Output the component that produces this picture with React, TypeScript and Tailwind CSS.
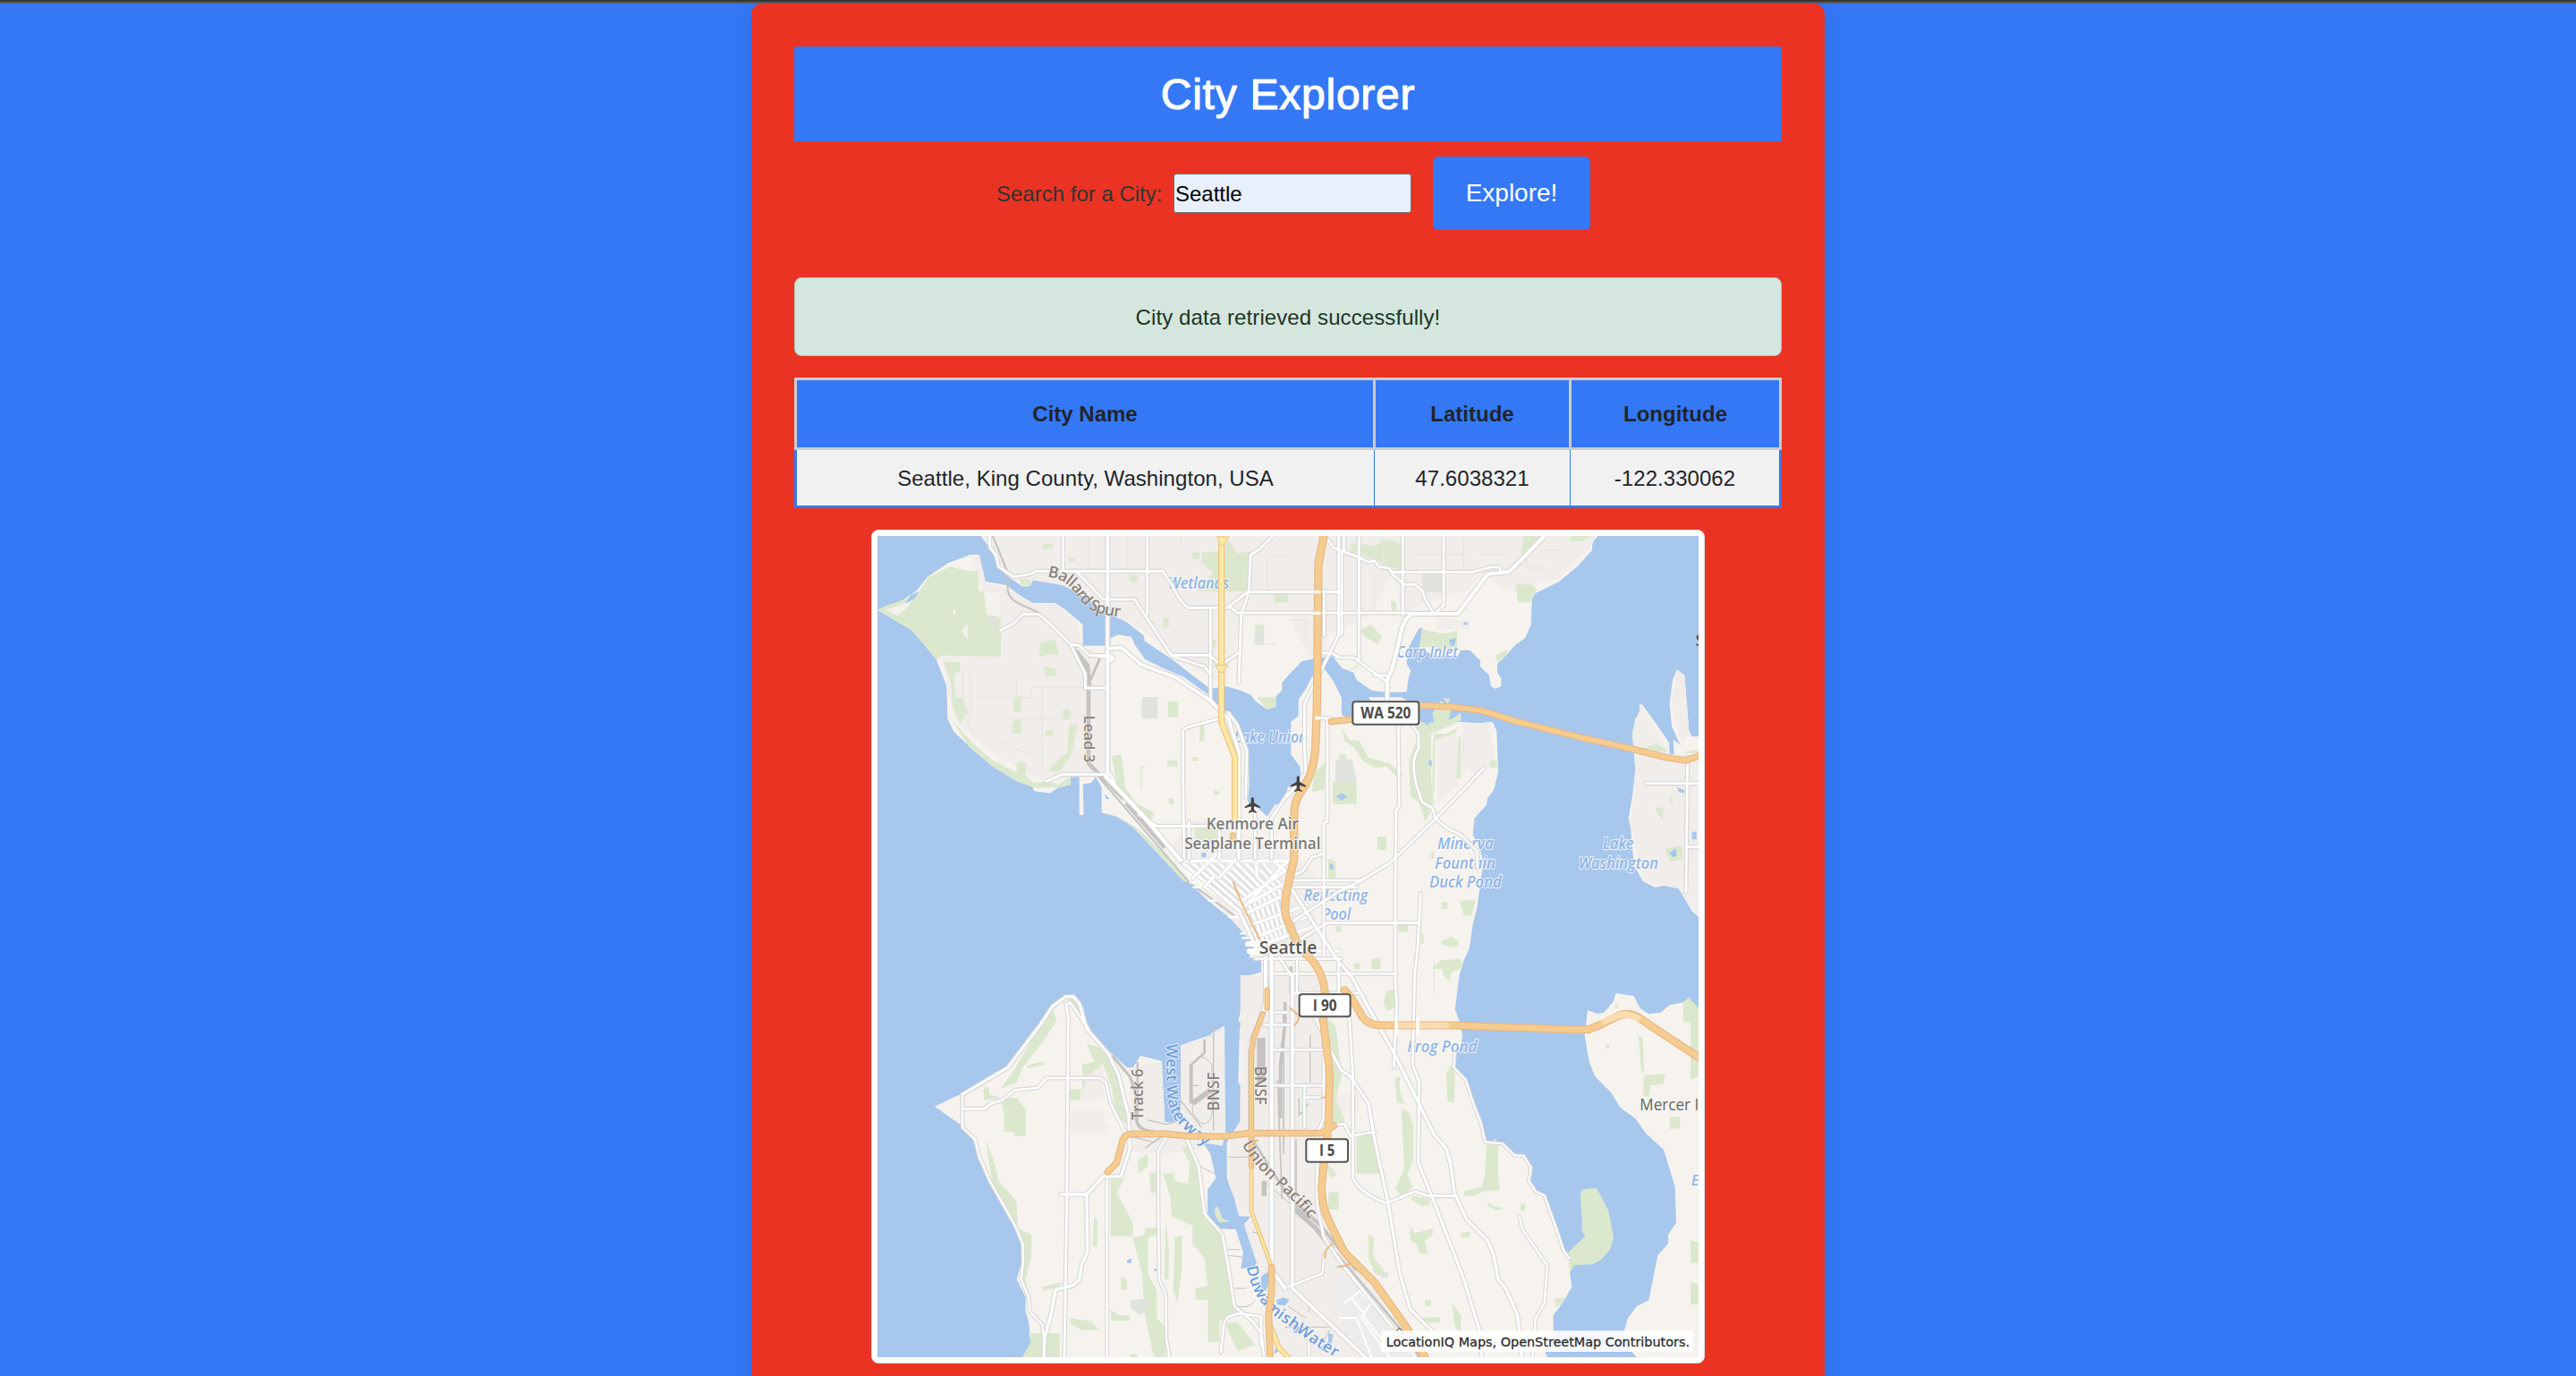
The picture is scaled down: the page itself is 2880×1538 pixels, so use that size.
import React from "react";

type Road = { d: string; w: number };

const LAND: string[] = [
  "M380 27 415 75 440 130 465 160 495 180 520 197 545 195 555 175 575 162 625 172 655 192 695 212 740 240 800 290 850 300 880 325 925 360 930 380 1020 440 1090 495 1150 540 1200 530 1250 545 1285 560 1300 580 1340 610 1365 600 1370 565 1390 545 1390 520 1415 490 1440 465 1455 448 1500 437 1560 430 1590 470 1630 485 1640 510 1690 545 1750 552 1808 550 1815 500 1822 480 1808 455 1815 400 1850 335 1862 345 1850 400 1900 430 1980 430 1990 410 2020 410 2055 445 2055 465 2085 495 2090 530 2105 540 2125 530 2125 505 2112 485 2112 455 2140 430 2170 395 2205 370 2225 325 2229 225 2320 180 2380 130 2430 75 2430 50 2450 27Z",
  "M345 90 375 90 395 180 465 192 500 218 540 248 560 252 630 252 665 275 700 305 722 325 722 395 815 395 815 370 840 358 885 365 895 390 930 440 990 470 1060 500 1150 565 1175 600 1210 620 1250 680 1278 740 1280 860 1275 920 1310 940 1340 968 1365 930 1395 920 1410 870 1455 850 1450 800 1420 760 1420 650 1445 630 1445 575 1470 540 1490 500 1530 470 1560 510 1590 570 1590 628 1625 640 1650 615 1690 585 1680 568 1790 568 1830 590 1850 630 1855 655 1870 670 1900 675 1940 655 1980 650 2050 655 2095 650 2110 680 2115 820 2100 880 2080 905 2075 930 2035 975 2030 1030 2052 1070 2065 1120 2055 1190 2045 1270 2030 1330 2018 1410 2000 1450 1985 1500 1970 1615 1985 1655 1995 1700 1990 1735 1970 1770 1968 1810 2005 1845 2035 1940 2055 1990 2070 2060 2130 2063 2170 2100 2200 2105 2225 2140 2230 2165 2220 2190 2240 2220 2270 2240 2310 2340 2335 2425 2360 2440 2355 2500 2362 2545 2330 2600 2300 2640 2300 2700 2270 2760 2280 2781 520 2781 548 2730 540 2660 530 2630 530 2580 500 2520 520 2450 515 2400 495 2340 440 2240 400 2170 365 2080 355 2050 310 2000 225 1940 320 1895 470 1805 580 1660 620 1600 665 1568 690 1570 725 1610 735 1670 800 1745 870 1810 890 1810 915 1770 987 1788 997 1992 1050 1992 1050 1735 1150 1715 1152 1695 1197 1670 1200 2025 1250 1990 1250 1895 1275 1905 1243 1860 1248 1675 1300 1675 1300 1655 1243 1655 1280 1500 1320 1490 1320 1450 1280 1440 1285 1415 1300 1410 1270 1360 1240 1330 1180 1280 1130 1240 1080 1190 1000 1100 900 1005 840 970 785 955 785 870 765 835 750 855 722 860 725 962 710 962 710 835 680 835 680 862 640 870 612 890 560 883 550 865 500 850 420 800 350 740 290 685 268 640 265 530 230 440 150 345 33 275 100 255 165 210 200 165 270 118Z",
  "M2594 590 2600 595 2640 650 2688 720 2690 760 2705 760 2702 710 2725 727 2697 665 2690 590 2700 510 2715 475 2740 495 2755 680 2765 700 2787 700V1305L2765 1285 2720 1210 2685 1198 2640 1205 2600 1185 2570 1130 2560 1010 2552 975 2565 900 2575 810 2565 690 2575 640 2592 620 2588 595Z",
  "M2787 1615 2755 1575 2740 1590 2690 1600 2660 1625 2620 1630 2590 1610 2570 1570 2510 1560 2500 1590 2470 1625 2450 1630 2415 1618 2405 1700 2420 1790 2440 1840 2495 1895 2525 1945 2575 1980 2610 2030 2670 2085 2690 2150 2708 2210 2712 2330 2685 2370 2685 2400 2650 2440 2620 2590 2580 2610 2550 2650 2535 2700 2560 2760 2580 2781H2787Z",
];

const SUBURB: string[] = [
  "M385 27 430 100 490 165 700 200 800 285 900 330 1030 430 1200 530 1220 440 1260 290H1410L1480 430H1530L1545 360 1690 290 1760 150 1790 290 1860 255 2010 210 2070 150 2130 210 2180 215 2229 190 2320 170 2430 60 2440 27Z",
  "M345 95 375 95 395 185 465 200 560 255 630 255 700 310 722 400 800 430 795 830 680 835 620 850 560 840 480 790 400 740 300 650 275 560 250 430 445 430V290L380 200Z",
  "M1995 655 2090 655 2100 780 2040 830 1990 800ZM1910 700 1975 680 1980 860 1910 920Z",
  "M2594 595 2690 760 2787 760V1300L2720 1210 2600 1185 2560 1000 2575 810 2565 690ZM2695 590 2715 475 2740 495 2755 680 2730 730Z",
  "M1250 1500H1510L1530 1640 1540 2000 1500 2060V2260L1540 2400 1700 2550 1830 2781H1400L1290 2500 1210 2180 1220 2030 1250 1990V1680Z",
  "M880 1810 985 1790 997 1992 1050 1992 1050 1735 1150 1700 1195 1670 1200 2070 990 2100 880 2090Z",
  "M1010 1090 1080 985 1180 985 1500 1150 1500 1400H1300Z",
  "M680 1955H795V2000H805V2035H680ZM720 1880 760 1800 790 1810V1920H715ZM1570 1900H1645V1960H1570ZM1990 310H2020V340H1910V300Z",
];

const PARKS: string[] = [
  "M33 275 60 262 165 225 205 165 275 130 340 145 372 145V212H390L400 290 447 300V432L250 428 232 442 150 345Z",
  "M255 450H310V480L290 490 295 570H320L335 620 310 655 285 600 280 520Z",
  "M280 640 350 720 420 780 500 820 560 855 600 850 640 860 680 835 680 862 640 870 560 872 500 850 420 800 340 735Z",
  "M500 785H530V830L560 860 500 840ZM675 660H705L685 760 640 820 605 815 630 785 670 755Z",
  "M580 385 630 375 640 425H600L575 435ZM590 465 630 470V495H595ZM490 565H515V620L490 615ZM485 655 500 640 517 650V690H485ZM655 610H680V643H655ZM598 678H622V700H598ZM305 600 335 615 310 640Z",
  "M505 170 545 172 550 190 520 195ZM1200 35 1215 45 1240 85 1282 80 1278 213H1195ZM1090 82H1113V105H1090ZM1120 80 1180 82V212H1105L1160 150 1122 120Z",
  "M878 157H905V182H878ZM990 300H1010V333H990ZM1300 325H1330V350H1300ZM1362 220H1410V250H1362ZM585 55H622V70H585ZM672 98H694V112H672ZM1155 375H1168V400H1155Z",
  "M820 765 850 760 855 800 865 870 900 925 963 955 955 975 905 960 840 890ZM1305 568H1370V600L1340 610ZM1007 580 1042 585V635H1007ZM1005 780H1040V800H1005ZM1090 768H1108V782H1090ZM1115 660 1130 665V715H1112ZM1160 880 1180 885V895H1160ZM1010 905 1028 910V928H1012ZM915 800H930V805H920V880H915Z",
  "M1098 1005H1170V1045L1130 1050 1098 1040ZM785 955 840 970 900 1005 1000 1100 1080 1190 1060 1185 980 1100 890 1005 830 965Z",
  "M1620 50 1700 60 1740 40 1790 55V145L1750 130 1700 105 1620 80ZM2175 190 2225 190 2245 205 2225 250H2180ZM2200 27H2280L2240 60 2190 110ZM2355 27H2430L2400 45H2355Z",
  "M1850 335 1880 345 1930 355 1978 345V400L1950 410 1880 400 1850 400ZM1655 340 1690 325 1725 365 1710 390 1660 360ZM2105 430 2150 405 2140 430 2112 450ZM1610 480 1650 455 1640 470ZM1755 240 1775 250 1770 300 1758 290Z",
  "M1895 620 1920 580 1960 600 1950 640 1900 655ZM1930 570 1955 575 1945 590ZM1990 620V645L1960 660 1890 690 1880 655 1960 640Z",
  "M1815 660 1860 650 1890 670V840L1900 920 1870 990 1850 920 1820 900 1815 780 1850 690Z",
  "M1900 690 1940 690 1980 670 1970 690 1905 710 1900 880 1895 900V760ZM1980 700H1990V840H1975ZM2090 780H2110V805H2085Z",
  "M1560 850H1640V927H1560ZM1580 760H1605V778H1580ZM1590 670 1615 710 1650 715 1680 770 1750 790 1800 830 1770 830 1740 800 1700 805 1660 780 1630 735 1600 715ZM1500 820 1545 780 1530 880 1490 885Z",
  "M1545 1110 1570 1120V1175H1545ZM1710 1035H1740V1080H1710ZM1890 1085H1900V1110H1890ZM1925 1255H1945V1278H1925ZM1985 1250 2040 1248 2025 1300 2000 1300ZM1780 1330H1812V1355H1780ZM1925 1385 1960 1370 1985 1390 1970 1408 1930 1400ZM1570 1335H1590V1355H1570ZM1855 1360H1865V1395H1855Z",
  "M1925 1450 1990 1445 1995 1475 1960 1490 1950 1520 1930 1500V1480L1900 1478V1470ZM1740 1550H1768V1610L1740 1620 1730 1590ZM1690 1445 1720 1440V1480H1690ZM1632 1460H1652V1480H1632Z",
  "M1535 1640 1570 1670 1590 1830 1570 1920 1600 1980 1600 2000 1565 2000 1545 2020 1560 1880 1545 1800ZM1640 2045 1695 2030 1720 2165H1640ZM1540 2130 1575 2170 1550 2180ZM1545 2230 1580 2225V2285H1545Z",
  "M1768 1845 1785 1840V1890L1800 1930 1775 1930ZM1790 1945 1815 1960 1830 2000V2120L1810 2170 1830 2210 1790 2240 1770 2215 1800 2150ZM1830 2240 1885 2250V2270L1860 2275 1820 2250Z",
  "M1940 1830 1960 1800 1970 1830 1968 1925H1945ZM2075 2060 2115 2060 2115 2170 2120 2220 2060 2225 2040 2240 2000 2240V2225L2060 2210 2070 2170ZM2190 2265H2205V2290H2190ZM2080 2260 2100 2275 2135 2280 2110 2290 2080 2275Z",
  "M1820 2340 1835 2365 1895 2350V2370L1870 2390 1880 2440 1850 2430 1840 2400 1820 2390ZM1680 2370 1700 2380 1695 2440 1730 2490 1725 2510 1700 2500 1680 2450ZM1990 2365 2020 2360V2380H1990ZM1850 2650 1920 2645V2665H1850ZM1960 2600 1990 2640V2700L1970 2680ZM1870 2590H1890V2610H1870Z",
  "M2390 2235 2395 2220 2445 2213 2485 2290 2502 2380 2490 2420 2460 2455 2430 2470 2370 2472 2355 2500 2350 2430 2380 2400 2407 2375 2395 2355 2397 2330ZM2303 2585 2345 2580 2310 2615ZM2100 2050 2110 2050 2108 2062H2098Z",
  "M2735 1590 2755 1575 2787 1610V1840L2760 1850V1660L2735 1655ZM2605 1835 2675 1830 2670 1865 2625 1870 2620 1910 2600 1900ZM2585 1700 2600 1710 2605 1830 2595 1820ZM2690 1975H2725V2015H2690ZM2760 2390 2787 2395V2465H2760ZM2760 2530 2787 2535V2605H2760ZM2475 1730H2487V1745H2475ZM2510 1590 2520 1610H2505Z",
  "M2600 740 2640 725 2680 740V750H2610ZM2640 935 2670 940 2665 980 2650 960ZM2675 1075 2730 1065 2735 1110 2690 1120ZM2690 900 2700 905V925H2690ZM2740 750 2787 745V755H2740Z",
  "M390 1876H408V1900L440 1908V1918H390ZM447 1915 500 1910 530 1950V2040H495L490 2025H457V1960ZM445 1880 490 1820 560 1700 620 1610 635 1650 590 1720 520 1810 500 1860ZM530 1805 560 1795 590 1790 595 1800 540 1812ZM675 1882H715V1920H675ZM650 1560 700 1590 720 1625H710L680 1590Z",
  "M735 1730 775 1740 830 1800 850 1870 870 1960 870 2000 830 1970 820 1880 790 1800 740 1835 720 1890V1800L760 1790Z",
  "M395 2050 420 2110 440 2190 500 2260 505 2350 550 2370 550 2440 530 2520 540 2590 520 2530 525 2420 480 2300 420 2210Z",
  "M815 2185 860 2185 835 2230 890 2330V2376H815ZM890 2380 930 2370V2350L970 2345V2370L940 2380V2500L970 2560V2650L1000 2680V2781H960L930 2640 920 2500ZM760 2310 770 2320V2410H755ZM815 2622 845 2640 880 2640V2658H818ZM850 2510 870 2520V2555H850Z",
  "M945 2162H980V2230H950ZM990 2165 1030 2165 1030 2190 1075 2200 1080 2130 1055 2080 1075 2070 1110 2150 1130 2310 1190 2375 1220 2500 1240 2630 1180 2660V2730H1142V2590L1100 2590V2550L1140 2540 1130 2450 1090 2400 1090 2340 1020 2310 1015 2240ZM1000 2310 1010 2420V2520H995ZM1030 2380 1055 2370V2480L1040 2600 1025 2560Z",
  "M540 2700H645V2781H520L548 2730ZM585 2545 655 2530 640 2545 590 2560ZM680 2650 750 2660 775 2690 720 2690 680 2670ZM1200 2670 1240 2660 1300 2740 1240 2760ZM905 2120 940 2100V2140L910 2165ZM880 2770H905V2781H880Z",
];

const WATERWAYS: string[] = [
  "M1200 1990 1250 1990 1220 2035 1205 2060 1205 2180 1230 2250 1245 2308 1285 2310 1262 2335 1290 2420 1305 2465 1295 2480 1252 2483 1260 2430 1235 2352 1185 2350 1140 2310 1140 2220 1168 2180 1150 2100 1125 2062 1190 2072 1202 2025Z",
  "M1320 2510 1350 2490 1355 2510 1335 2560 1320 2550ZM1370 2590 1395 2580 1415 2590 1400 2608 1375 2605ZM1545 2700 1562 2705 1555 2735 1525 2760 1515 2750 1545 2730ZM1425 2680 1440 2660 1450 2700 1430 2700ZM1365 2750 1380 2760 1365 2770Z",
  "M125 255 145 225 172 213 160 235ZM795 890 812 910H800ZM1120 1090H1135V1105H1120ZM1998 318 2010 316 2015 325 2000 325ZM1570 900 1590 890 1608 900 1590 915ZM1550 1125 1562 1130V1145H1550ZM2765 1020 2780 1018V1045H2765ZM2690 1090 2710 1075 2715 1100 2700 1105ZM870 2455 885 2450V2465H870ZM1882 780 1892 780V800L1882 795ZM2715 870 2740 880V890L2720 885ZM1848 340 1860 335 1852 390H1845ZM1950 375 1975 370 1968 395H1955ZM960 2485H970V2492H960Z",
];

const GREY_AREAS =
  "M920 567H973V640H920ZM1862 150H1930V215H1862ZM1570 778 1625 775 1640 850H1568ZM880 2590 940 2585 945 2610 915 2640 885 2620ZM1725 2495H1745V2515H1725ZM405 300H435V325H410ZM1298 345H1330V392H1298Z";

const RAILS: Road[] = [
  { d: "M420 27 470 150V210Q475 240 510 255L575 285 640 345 680 390", w: 6 },
  { d: "M675 385 735 470 741 540V790L780 830 860 910", w: 14 },
  { d: "M700 410 740 460 748 540M780 435 748 510", w: 9 },
  { d: "M870 920 1000 1070", w: 22 },
  { d: "M770 830 1080 1190 1230 1300", w: 6 },
  { d: "M820 1770 880 1840 900 1900V1980Q905 2020 960 2025", w: 9 },
  { d: "M905 1790V2000Q910 2020 960 2022", w: 7 },
  { d: "M1130 1715V1760L1085 1800", w: 8 },
  { d: "M1085 1800V1930", w: 12 },
  { d: "M1090 1930 1150 1885", w: 18 },
  { d: "M1085 1800Q1120 1750 1155 1800V1970Q1130 2030 1090 1960Z", w: 3 },
  { d: "M940 1985 1000 2000 1060 1985M880 2040 960 2060 990 2040M1050 1920 1120 2010M930 2080 980 2045M1160 1670V2020M1090 1870H1110", w: 4 },
  { d: "M1320 1710V1860", w: 28 },
  { d: "M1400 1590V1660L1385 1800V1980M1420 1470V1560", w: 11 },
  { d: "M1375 1850 1390 2250M1395 1620V2100M1437 2050V2240L1425 2250", w: 5 },
  { d: "M1484 1700V1860M1447 1910V1970L1480 1930", w: 4 },
  { d: "M1290 2050 1410 2240 1790 2690 1850 2781", w: 8 },
  { d: "M1330 2190V2240M1425 2280 1500 2345 1560 2420", w: 16 },
  { d: "M1430 2260 1520 2340 1640 2490", w: 12 },
  { d: "M1330 2190 1420 2270M1290 2360 1320 2370 1300 2330M1410 2610 1470 2650M1480 2590V2630M1400 2680H1550M1550 2690 1520 2740", w: 3 },
  { d: "M1210 2420H1250M1210 2440 1260 2445M1230 2550H1270M1210 2110H1280M1110 2140 1165 2165M1240 2610Q1280 2620 1300 2590M1210 2350H1230", w: 3 },
];

const MINOR =
  "M740 27V140M370 570H550V535H800M585 535V820M480 640H640M500 500V565M870 27V140M1050 27V60M1360 90 1410 100M1340 100V210M1300 390H1370M320 480V620L360 700M345 490V640M450 720 540 760M1700 150V290M1730 30V150M1830 90H2000M1850 230 1900 230M2000 30V140M2050 90H2130M2210 70V135H2280M2210 75H2330M1410 310H1470V390M1240 420V520M1900 1450V1560M2000 700V820";

const AIRFIELD = "M1600 2600 1650 2560 1690 2600 1660 2640 1740 2740M1650 2640 1750 2780M1580 2650H1640L1690 2781M1620 2580 1670 2640";

const ROADS: Road[] = [
  { d: "M805 27V830", w: 11 },
  { d: "M655 27V140M938 27V290M410 27V65L430 90 440 130 490 165 545 155 565 145H990L1020 190Q1045 245 1075 268H1180", w: 8 },
  { d: "M700 145 790 240H895L935 300 1020 430 1130 465 1150 490M1150 270V580", w: 8 },
  { d: "M1210 265 1275 215H1590M1190 270 1215 265 1240 285H1820M1360 27 1310 75 1285 90 1278 220 1253 290 1245 520M1150 430 1185 460 1250 415M1020 427H1150", w: 8 },
  { d: "M445 345 490 320 520 290H575L610 320 680 390 730 490V537H800M680 390 710 395 745 428H800", w: 8 },
  { d: "M780 430H815Q830 440 815 445M815 405 850 400 920 460 1030 500 1150 580 1210 640 1245 750V1110", w: 11 },
  { d: "M1210 620 1240 660 1272 750 1268 905M1180 640 1070 670 1058 680V850L1062 1110M1078 985V1110M600 850 650 827H815L830 860", w: 8 },
  { d: "M800 835 920 960 1050 1115", w: 13 },
  { d: "M910 960 970 1000H1180M1300 960V1110M1355 970V1110M1410 890 1350 980M1180 1000V1110", w: 8 },
  { d: "M1545 40 1560 65 1650 100 1680 115 1700 110 1715 130 1750 135 1760 155 1800 190H1835L1860 210 1870 240 1900 290", w: 8 },
  { d: "M1580 27V360L1530 460 1475 570 1465 590V740L1470 820 1410 900M1598 27V80M1590 80V360M1648 27V440M1531 210V360", w: 8 },
  { d: "M1795 27V290M1932 27V260L1900 290M1760 148H2030L2090 132H2120L2125 148", w: 8 },
  { d: "M2270 27 2190 110 2150 148 2080 155 2000 260 1980 288H1830Q1795 300 1785 370L1760 470 1743 510V580", w: 12 },
  { d: "M1520 420H1560L1580 435H1630L1740 515M1700 495H1745M1500 638H1550L1565 650", w: 8 },
  { d: "M1542 640V985L1530 990V1435M1780 660 1783 935 1773 945 1770 1210V1520L1775 1600 1765 1810", w: 8 },
  { d: "M1825 660 1848 690V740Q1820 780 1840 860L1860 920 1895 940 1905 975 1940 1005 1990 1030 2045 1085V1140", w: 8 },
  { d: "M2068 805 1900 980 1750 1125 1650 1185 1580 1220 1410 1330", w: 8 },
  { d: "M1410 1182H1660M1430 1205H1640M1450 1380 1540 1325H1850M1855 1225 1845 1410 1835 1500 1828 1800 1850 1860 1847 2130M1420 1170 1460 1150 1490 1105 1530 1092", w: 8 },
  { d: "M1415 1200 1550 1410 1580 1455 1620 1500 1770 1770 1900 2035 1940 2080 1955 2130 1968 2230 2010 2320 2080 2390 2100 2440 2115 2520 2140 2550 2180 2640 2195 2781", w: 10 },
  { d: "M2750 770 2745 1220M2610 857H2787M2750 1070H2787", w: 8 },
  { d: "M318 1900 470 1810 580 1665 620 1605 665 1572H690L710 1595 735 1680 805 1760 840 1830 855 1890 875 1970 880 2080 850 2175H800", w: 9 },
  { d: "M665 1597 673 1640 668 2270 660 2781M665 1597 680 1592 740 1680", w: 8 },
  { d: "M318 1900V2010L360 2050 375 2110 410 2190 495 2340 520 2400 522 2460 515 2520 540 2580 545 2630 585 2670 592 2720", w: 7 },
  { d: "M318 1948H390L415 1930 450 1920 495 1885 570 1878 600 1845H780L800 1860 815 1930 865 2030", w: 8 },
  { d: "M648 2235H735L800 2165M735 2235 737 2430 718 2470 710 2520 690 2540 630 2555 615 2640 592 2720V2781", w: 10 },
  { d: "M803 2170V2781M1000 2045 975 2090V2260L978 2520 1000 2570 1002 2720 1012 2781", w: 7 },
  { d: "M1070 2050 1110 2140 1130 2300 1190 2370 1210 2480 1230 2610 1290 2660 1320 2700 1328 2770M1185 2765 1195 2670Q1200 2640 1250 2635L1320 2645V2740", w: 8 },
  { d: "M1355 1430V2490L1400 2550M1335 1440V1600L1285 1730V2040", w: 12 },
  { d: "M1425 1500V2550L1700 2810", w: 10 },
  { d: "M1440 1440V1560M1300 1445H1590M1355 1495H1775M1355 1625H1410M1330 1667H1420M1430 1560H1655M1420 1750H1550M1360 1870H1530M1465 1870V2010M1465 1910H1530M1360 1750H1410", w: 7 },
  { d: "M1580 1450V1560M1500 1640 1530 1700V1980L1508 2030V2270L1530 2380 1600 2480 1760 2680M1380 1440 1420 1500", w: 8 },
  { d: "M1615 1640 1628 1840V2180Q1650 2230 1740 2265L1835 2225 1880 2240H1970M1565 2000H1600L1620 2040 1700 2025", w: 8 },
  { d: "M1550 1750 1590 1820 1620 1840 1680 1930 1700 2050 1745 2260 1785 2500 1820 2620 1900 2700", w: 9 },
  { d: "M1847 2130 1900 2260 2000 2520 2055 2700 2060 2781", w: 9 },
  { d: "M1970 1760 1966 1810 2005 1850 2035 1940 2055 1990 2072 2060 2130 2065 2170 2105H2200L2225 2145 2218 2190 2240 2225 2270 2240 2310 2350 2335 2425 2355 2450", w: 6 },
  { d: "M2187 2310 2195 2350 2280 2475 2270 2600 2240 2650 2230 2781M1525 2500 1410 2545M1533 2430 1525 2500M1480 2690V2781", w: 7 },
];

/* Avenues run from the northern grid, bend at the centre and continue to the stadium district. */
const AVENUES: string[] = Array.from(
  { length: 10 },
  (_, i) => `M${1052 + i * 30} 1119L${1246 + i * 17} ${1284 - i * 8}L${1306 + i * 14} ${1415 - i * 6}`
);

const CROSS_STREETS: string[] = [
  "M1090 1175 1170 1095M1180 1172 1240 1105M1130 1205 1160 1170",
  "M1265 1270 1415 1110M1275 1290 1410 1225M1285 1255 1420 1180M1250 1255 1400 1150",
  "M1290 1330 1470 1265M1310 1370 1480 1300M1330 1395 1500 1335",
  "M1040 1117H1410M1305 1110V1170L1350 1210M1355 1110 1400 1150",
  "M1300 1419H1580",
];

const PIERS = "M1080 1190H1100M1090 1205H1120M1140 1250H1170M1210 1305H1245M1250 1360H1285M1255 1375H1290";

const MOTORWAYS: Road[] = [
  { d: "M1530 27 1512 120 1507 600 1502 740Q1495 830 1450 890 1430 920 1430 970V1110L1410 1200Q1390 1280 1410 1320L1440 1390", w: 21 },
  { d: "M1470 1430Q1530 1480 1535 1570L1528 1650 1550 1830 1545 2010 1525 2180Q1515 2260 1550 2330L1600 2430 1700 2530 1800 2670 1870 2781", w: 20 },
  { d: "M1555 650 1640 640 1850 595 1960 600 2060 613 2180 650 2380 700 2560 740 2680 770 2745 780 2787 765", w: 16 },
  { d: "M1600 1550 1625 1580 1660 1640Q1680 1668 1720 1668H1960L2350 1682H2420L2460 1665 2510 1640Q2550 1618 2590 1645L2650 1685 2787 1775", w: 20 },
  { d: "M805 2160 835 2130 855 2055Q862 2032 890 2032H1000L1080 2040H1200L1280 2030H1520L1565 2005", w: 16 },
  { d: "M1340 1550V1610M1325 1630 1295 1710 1287 1760V2140", w: 12 },
  { d: "M1355 2480V2560L1345 2640 1350 2781", w: 17 },
  { d: "M1225 1030V1045", w: 12 },
];

const LINKS = "M1560 2400Q1530 2420 1533 2450M1575 2478Q1620 2475 1628 2455M1415 1608 1440 1630Q1455 1645 1430 1670M1520 1910H1540M1290 2055H1310M1225 1185 1260 1270 1315 1380";

const TRUNKS: Road[] = [
  { d: "M1187 27V650L1232 770V980", w: 15 },
  { d: "M1287 2140V2290L1352 2470", w: 7 },
  { d: "M1352 2680 1380 2750 1410 2781", w: 12 },
];

const PLANE = "M0-26C3-26 5-22 5-17V-7L26 6V11L5 5V17L13 23V27L0 23-13 27V23L-5 17V5L-26 11V6L-5-7V-17C-5-22-3-26 0-26Z";

type LabelProps = { x: number; y: number; w: number; size?: number; rotate?: number; kind: "water" | "place" | "rail" | "city"; children: string };

const LABEL_STYLES = {
  water: "fill-[#90b5e8] italic",
  place: "fill-[#7a7a7a]",
  rail: "fill-[#8b8178]",
  city: "fill-[#585858]",
};

function Label({ x, y, w, size = 54, rotate = 0, kind, children }: LabelProps) {
  return (
    <text
      x={x}
      y={y}
      fontSize={size}
      textLength={w}
      lengthAdjust="spacingAndGlyphs"
      textAnchor="middle"
      transform={rotate ? `rotate(${rotate} ${x} ${y})` : undefined}
      stroke="#fbfaf8"
      strokeWidth={kind === "rail" ? 4 : 7}
      strokeOpacity={0.75}
      strokeLinejoin="round"
      paintOrder="stroke"
      fontWeight={600}
      className={LABEL_STYLES[kind]}
    >
      {children}
    </text>
  );
}

function Shield({ x, y, w, h, tw, children }: { x: number; y: number; w: number; h: number; tw: number; children: string }) {
  return (
    <g>
      <rect x={x} y={y} width={w} height={h} rx={9} fill="#fff" stroke="#555" strokeWidth={6} />
      <text x={x + w / 2} y={y + h / 2 + 18} fontSize={51} fontWeight={700} textAnchor="middle" textLength={tw} lengthAdjust="spacingAndGlyphs" fill="#4a4a4a">
        {children}
      </text>
    </g>
  );
}

function Roads({ items, fill, casing }: { items: Road[]; fill: string; casing: string }) {
  return (
    <g fill="none" strokeLinejoin="round" strokeLinecap="round">
      {items.map((r, i) => (
        <path key={`c${i}`} d={r.d} stroke={casing} strokeWidth={r.w + 7} />
      ))}
      {items.map((r, i) => (
        <path key={`f${i}`} d={r.d} stroke={fill} strokeWidth={r.w} />
      ))}
    </g>
  );
}

function CityMap() {
  return (
    <svg viewBox="33 27 2754 2754" className="block size-full font-['Open_Sans','Noto_Sans',sans-serif]" role="img" aria-label="Map of Seattle">
      <defs>
        <path id="ballard" d="M603 165Q665 170 700 225T790 290 870 300" />
        <path id="westww" d="M1003 1730V1880Q1005 1960 1045 2000T1160 2095" />
        <path id="pacific" d="M1255 2068Q1290 2130 1350 2185T1440 2270 1500 2340" />
        <path id="duwamish" d="M1272 2478Q1290 2590 1375 2650T1500 2740L1580 2790" />
      </defs>
      <rect x="33" y="27" width="2754" height="2754" fill="#a7c7ed" />
      {LAND.map((d, i) => (
        <path key={i} d={d} fill="#f6f3ee" />
      ))}
      {SUBURB.map((d, i) => (
        <path key={i} d={d} fill="#f0edea" />
      ))}
      {PARKS.map((d, i) => (
        <path key={i} d={d} fill="#dce8ce" />
      ))}
      <path d="M60 275 110 258 155 235 130 270 100 295ZM390 220 445 215V290L400 292V250ZM285 265 298 285 288 295ZM315 345 335 320V375Z" fill="#f4f2ec" />
      <path d="M1590 2500 1640 2530 1760 2680 1830 2781H1660L1590 2690Z" fill="#ececec" />
      <path d={AIRFIELD} fill="none" stroke="#fff" strokeWidth="6" />
      <path d={GREY_AREAS} fill="#e0e2dd" />
      {WATERWAYS.map((d, i) => (
        <path key={i} d={d} fill="#a7c7ed" />
      ))}
      <path d="M1165 2280 1175 2275 1190 2315 1215 2325 1180 2330 1165 2305Z" fill="#dce8ce" />
      <path d={MINOR} fill="none" stroke="#e7e5e3" strokeWidth="4" />
      <g fill="none" stroke="#c4c3c1" strokeLinejoin="round">
        {RAILS.map((r, i) => (
          <path key={i} d={r.d} strokeWidth={r.w} />
        ))}
      </g>
      <path d={PIERS} stroke="#fff" strokeWidth="7" />
      <path d="M1050 1115 1100 1175 1230 1265 1310 1400" fill="none" stroke="#fff" strokeWidth="18" strokeLinejoin="round" />
      <Roads items={AVENUES.map((d) => ({ d, w: 10 }))} fill="#ffffff" casing="#dddcdb" />
      <Roads items={CROSS_STREETS.map((d) => ({ d, w: 9 }))} fill="#ffffff" casing="#e8e7e6" />
      <path d="M1275 1395H1320M1280 1420H1330" stroke="#fff" strokeWidth="18" strokeLinecap="round" />
      <Label x={1110} y={203} w={205} kind="water">Wetlands</Label>
      <Label x={1352} y={720} w={245} kind="water">Lake Union</Label>
      <Label x={1877} y={434} w={205} kind="water">Carp Inlet</Label>
      <Label x={2005} y={1077} w={188} kind="water">Minerva</Label>
      <Label x={2004} y={1142} w={202} kind="water">Fountain</Label>
      <Label x={2005} y={1207} w={242} kind="water">Duck Pond</Label>
      <Label x={1570} y={1250} w={215} kind="water">Reflecting</Label>
      <Label x={1572} y={1315} w={98} kind="water">Pool</Label>
      <Label x={1927} y={1757} w={234} kind="water">Frog Pond</Label>
      <Roads items={ROADS} fill="#ffffff" casing="#d9d8d7" />
      <Roads items={TRUNKS} fill="#fce8a4" casing="#ecc382" />
      <path d="M1165 460H1207L1192 485H1182ZM1172 30H1212L1192 60H1182Z" fill="#fce8a4" stroke="#ecc382" strokeWidth="3" />
      <path d={LINKS} fill="none" stroke="#edb984" strokeWidth="6" />
      <g fontSize="52" fontWeight="600" stroke="#fbfaf8" strokeWidth="6" strokeOpacity="0.75" paintOrder="stroke" strokeLinejoin="round">
        <text className="fill-[#6d9ddc]">
          <textPath href="#duwamish" textLength="440">DuwamishWater</textPath>
        </text>
        <text className="fill-[#6d9ddc]">
          <textPath href="#westww" textLength="395">West Waterway</textPath>
        </text>
      </g>
      <Roads items={MOTORWAYS} fill="#f5cb8f" casing="#e8b886" />
      <path d="M1775 1668H1950M2465 1660Q2500 1637 2535 1632 2565 1632 2590 1650" fill="none" stroke="#f9dcb0" strokeWidth="21" />
      <path d="M1495 215H1520M1495 286H1520M1500 638H1520M1845 1640V1700M1773 1640V1700" stroke="#fff" strokeWidth="10" />

      <g fontSize="53" fontWeight="600" stroke="#fbfaf8" strokeWidth="4" strokeOpacity="0.7" paintOrder="stroke" strokeLinejoin="round">
        <text className="fill-[#8b8178]">
          <textPath href="#ballard" textLength="290">Ballard Spur</textPath>
        </text>
        <text className="fill-[#8b8178]">
          <textPath href="#pacific" textLength="340">Union Pacific</textPath>
        </text>
      </g>
      <Label x={726} y={708} w={158} size={50} rotate={90} kind="rail">Lead 3</Label>
      <Label x={924} y={1900} w={172} size={52} rotate={-90} kind="rail">Track 6</Label>
      <Label x={1180} y={1890} w={130} size={54} rotate={-90} kind="rail">BNSF</Label>
      <Label x={1300} y={1870} w={130} size={54} rotate={90} kind="rail">BNSF</Label>
      <Label x={2518} y={1077} w={104} kind="water">Lake</Label>
      <Label x={2518} y={1142} w={268} kind="water">Washington</Label>
      <text x={2762} y={2205} fontSize={50} fontWeight={600} className="fill-[#8fb5e8] italic">E</text>
      <text x={2777} y={397} fontSize={52} fontWeight={600} className="fill-[#4f4f4f]">S</text>
      <Label x={1291} y={1012} w={310} kind="place">Kenmore Air</Label>
      <Label x={1291} y={1077} w={457} kind="place">Seaplane Terminal</Label>
      <Label x={1410} y={1427} w={194} size={60} kind="city">Seattle</Label>
      <text x={2590} y={1953} fontSize={52} fontWeight={500} textLength={198} lengthAdjust="spacingAndGlyphs" className="fill-[#666666]">Mercer I</text>
      <path d={PLANE} transform="translate(1291 929)" fill="#444" />
      <path d={PLANE} transform="translate(1444 858)" fill="#444" />
      <Shield x={1627} y={583} w={222} h={76} tw={168}>WA 520</Shield>
      <Shield x={1448} y={1564} w={171} h={75} tw={80}>I 90</Shield>
      <Shield x={1471} y={2050} w={140} h={76} tw={52}>I 5</Shield>
      <text x={1755} y={2700} fontSize={48} transform="rotate(48 1755 2700)" className="fill-[#8b8178]">B</text>
      <rect x="1722" y="2692" width="1047" height="71" fill="#fff" fillOpacity="0.88" />
      <text x="1739" y="2745" fontSize="43" textLength="1018" lengthAdjust="spacingAndGlyphs" fill="#2c2c2c" stroke="#2c2c2c" strokeWidth="0.8" className="font-['DejaVu_Sans',sans-serif]">
        LocationIQ Maps, OpenStreetMap Contributors.
      </text>
    </svg>
  );
}

export default function App() {
  return (
    <div className="flex h-[1538px] flex-col overflow-hidden bg-[#3478f6] font-['Liberation_Sans',Arial,sans-serif] text-2xl text-[#212529]">
      <div className="h-1 shrink-0 border-b-2 border-[#5d5d61] bg-[#37373a]" />
      <main className="mx-auto flex h-[1600px] w-[1200px] shrink-0 flex-col items-center rounded-xl bg-[#eb3323] px-12 pt-12 shadow-[0_0_20px_rgba(0,0,0,0.1)]">
        <h1 className="flex h-[106px] w-full items-center justify-center bg-[#3478f6] pt-0.5 text-5xl tracking-[0.75px] text-white [-webkit-text-stroke:1.1px_white]">City Explorer</h1>
        <form className="mt-[17px] flex h-[82px] w-full items-center pl-[226px]" onSubmit={(e) => e.preventDefault()}>
          <label htmlFor="city" className="w-[198px] whitespace-nowrap pt-px text-[#333333]">
            Search for a City:
          </label>
          <input id="city" defaultValue="Seattle" className="h-11 w-[266px] rounded-[3px] border border-[#767676] bg-[#e8f0fe] px-px pt-px text-black outline-none" />
          <button className="ml-6 h-[82px] w-[176px] rounded-md bg-[#3478f6] text-[28px] text-white">Explore!</button>
        </form>
        <div role="alert" className="mt-[53px] flex h-[88px] w-full items-center justify-center rounded-lg border border-[#a9cfbc] bg-[#d5e6de] pt-0.5 tracking-[0.1px] text-[#1b3626]">
          City data retrieved successfully!
        </div>
        <div className="mt-6 w-full text-center">
          <div className="grid h-[81px] grid-cols-[644px_216px_232px] gap-[3px] border-3 border-[#cccccc] bg-[#cccccc] font-bold">
            {["City Name", "Latitude", "Longitude"].map((h) => (
              <div key={h} className="flex items-center justify-center bg-[#3478f6]">
                {h}
              </div>
            ))}
          </div>
          <div className="grid h-[65px] grid-cols-[645px_218px_233px] gap-px border-3 border-t-0 border-[#3478f6] bg-[#3478f6]">
            {["Seattle, King County, Washington, USA", "47.6038321", "-122.330062"].map((c) => (
              <div key={c} className="flex items-center justify-center bg-[#f1f1f1] pt-0.5 tracking-[0.05px]">
                {c}
              </div>
            ))}
          </div>
        </div>
        <div className="mt-6 size-[932px] shrink-0 rounded-lg border border-[#dee2e6] bg-white p-1.5">
          <CityMap />
        </div>
      </main>
    </div>
  );
}
